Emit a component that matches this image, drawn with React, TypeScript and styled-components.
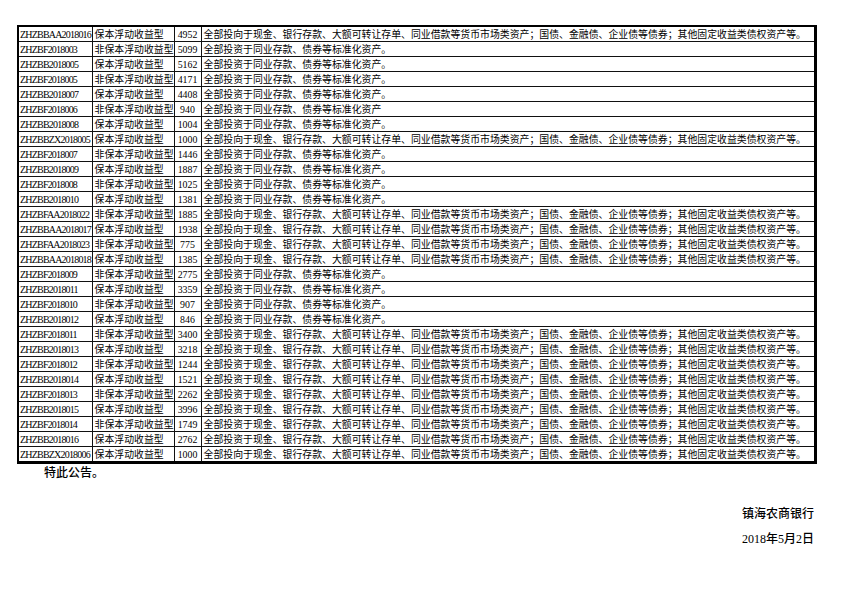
import React from 'react'
import styled, { createGlobalStyle } from 'styled-components'

const GlobalStyle = createGlobalStyle`
  html, body {
    margin: 0;
    padding: 0;
    background: #ffffff;
  }
  body {
    font-family: 'Liberation Serif', 'Noto Sans CJK SC', serif;
    color: #000;
  }
`

const CASH =
  '全部投向于现金、银行存款、大额可转让存单、同业借款等货币市场类资产；国债、金融债、企业债等债券；其他固定收益类债权资产等。'
const BOND = '全部投资于同业存款、债券等标准化资产。'
const FULL = '全部投资于现金、银行存款、大额可转让存单、同业借款等货币市场类资产；国债、金融债、企业债等债券；其他固定收益类债权资产等。'

const FLOAT = '保本浮动收益型'
const NON_FLOAT = '非保本浮动收益型'

type Product = { code: string; type: string; amount: string; scope: string }

const products: Product[] = [
  { code: 'ZHZBBAA2018016', type: FLOAT, amount: '4952', scope: CASH },
  { code: 'ZHZBF2018003', type: NON_FLOAT, amount: '5099', scope: BOND },
  { code: 'ZHZBB2018005', type: FLOAT, amount: '5162', scope: BOND },
  { code: 'ZHZBF2018005', type: NON_FLOAT, amount: '4171', scope: BOND },
  { code: 'ZHZBB2018007', type: FLOAT, amount: '4408', scope: BOND },
  { code: 'ZHZBF2018006', type: NON_FLOAT, amount: '940', scope: '全部投资于同业存款、债券等标准化资产' },
  { code: 'ZHZBB2018008', type: FLOAT, amount: '1004', scope: BOND },
  { code: 'ZHZBBZX2018005', type: FLOAT, amount: '1000', scope: CASH },
  { code: 'ZHZBF2018007', type: NON_FLOAT, amount: '1446', scope: BOND },
  { code: 'ZHZBB2018009', type: FLOAT, amount: '1887', scope: BOND },
  { code: 'ZHZBF2018008', type: NON_FLOAT, amount: '1025', scope: BOND },
  { code: 'ZHZBB2018010', type: FLOAT, amount: '1381', scope: BOND },
  { code: 'ZHZBFAA2018022', type: NON_FLOAT, amount: '1885', scope: CASH },
  { code: 'ZHZBBAA2018017', type: FLOAT, amount: '1938', scope: CASH },
  { code: 'ZHZBFAA2018023', type: NON_FLOAT, amount: '775', scope: CASH },
  { code: 'ZHZBBAA2018018', type: FLOAT, amount: '1385', scope: CASH },
  { code: 'ZHZBF2018009', type: NON_FLOAT, amount: '2775', scope: BOND },
  { code: 'ZHZBB2018011', type: FLOAT, amount: '3359', scope: BOND },
  { code: 'ZHZBF2018010', type: NON_FLOAT, amount: '907', scope: BOND },
  { code: 'ZHZBB2018012', type: FLOAT, amount: '846', scope: BOND },
  { code: 'ZHZBF2018011', type: NON_FLOAT, amount: '3400', scope: FULL },
  { code: 'ZHZBB2018013', type: FLOAT, amount: '3218', scope: FULL },
  { code: 'ZHZBF2018012', type: NON_FLOAT, amount: '1244', scope: FULL },
  { code: 'ZHZBB2018014', type: FLOAT, amount: '1521', scope: FULL },
  { code: 'ZHZBF2018013', type: NON_FLOAT, amount: '2262', scope: FULL },
  { code: 'ZHZBB2018015', type: FLOAT, amount: '3996', scope: FULL },
  { code: 'ZHZBF2018014', type: NON_FLOAT, amount: '1749', scope: FULL },
  { code: 'ZHZBB2018016', type: FLOAT, amount: '2762', scope: FULL },
  { code: 'ZHZBBZX2018006', type: FLOAT, amount: '1000', scope: CASH },
]

export default function App(): JSX.Element {
  return (
    <>
      <GlobalStyle />
      <Page>
        <Table>
          <colgroup>
            <col style={{ width: 74 }} />
            <col style={{ width: 82 }} />
            <col style={{ width: 27 }} />
            <col />
          </colgroup>
          <tbody>
            {products.map((p) => (
              <Row key={p.code}>
                <CodeCell>{p.code}</CodeCell>
                <Cell>{p.type}</Cell>
                <Cell $align="center">{p.amount}</Cell>
                <Cell>{p.scope}</Cell>
              </Row>
            ))}
          </tbody>
        </Table>
        <Notice>特此公告。</Notice>
        <Signature>
          <SignLine>镇海农商银行</SignLine>
          <SignLine>2018年5月2日</SignLine>
        </Signature>
      </Page>
    </>
  )
}

const Page = styled.div`
  width: 842px;
  height: 595px;
  padding-top: 25px;
  box-sizing: border-box;
`

const Table = styled.table`
  margin-left: 17px;
  width: 800px;
  table-layout: fixed;
  border-collapse: collapse;
  border-left: 2px solid #000;
  border-top: 2px solid #000;
  border-right: 3px solid #000;
  border-bottom: 3px solid #000;
`

const Row = styled.tr`
  height: 15px;
`

const Cell = styled.td<{ $align?: 'left' | 'center' }>`
  border: 1px solid #111;
  padding: 0 2px;
  height: 14px;
  line-height: 13px;
  font-size: 9.9px;
  font-family: 'Liberation Serif', 'Noto Sans CJK SC', serif;
  text-align: ${(p) => p.$align ?? 'left'};
  white-space: nowrap;
  overflow: hidden;
  color: #000;
`

const CodeCell = styled(Cell)`
  padding: 0 0 0 1px;
  font-size: 10px;
  letter-spacing: -0.8px;
`

const Notice = styled.div`
  margin: 1px 0 0 44px;
  font-family: 'Noto Sans CJK SC', sans-serif;
  font-size: 12px;
  line-height: 14px;
  font-weight: 500;
`

const Signature = styled.div`
  margin-top: 28px;
  padding-right: 28px;
  display: flex;
  flex-direction: column;
  align-items: flex-end;
  gap: 11px;
`

const SignLine = styled.div`
  font-family: 'Liberation Serif', 'Noto Sans CJK SC', serif;
  font-size: 12px;
  line-height: 14px;
  font-weight: 500;
`
